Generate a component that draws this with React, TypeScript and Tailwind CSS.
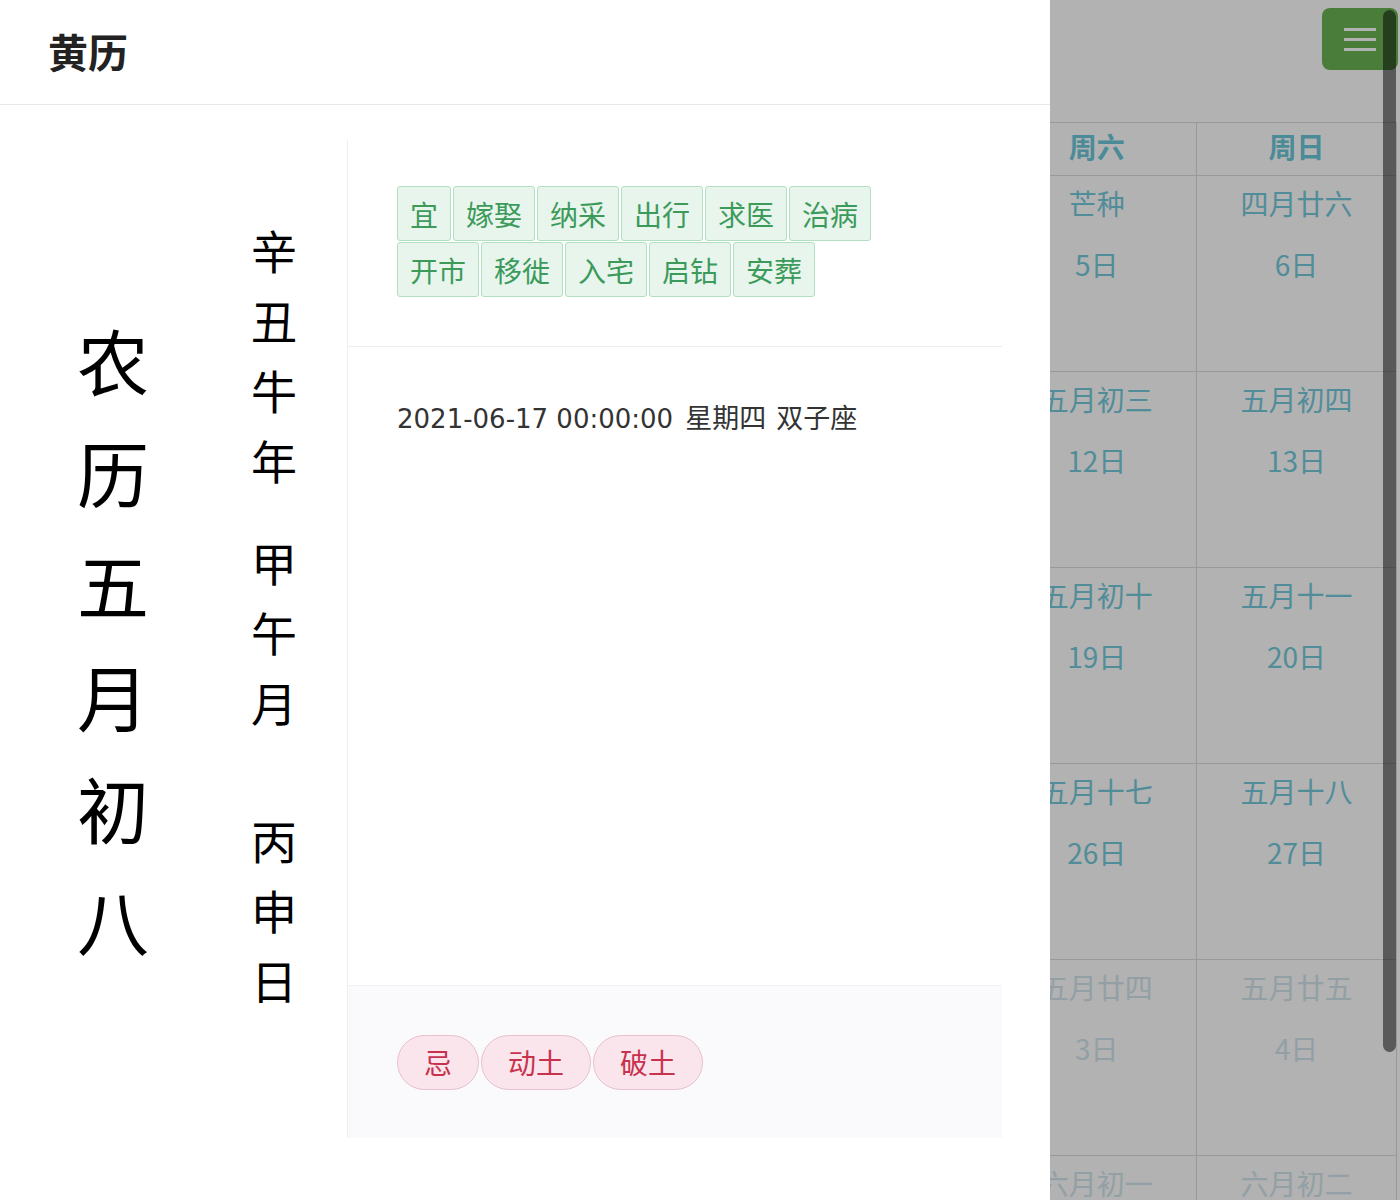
import React from "react";

const font = { fontFamily: '"Noto Sans CJK SC", "Noto Sans", sans-serif' };
const latin = { fontFamily: '"DejaVu Sans", "Noto Sans CJK SC", sans-serif' };

type Cell = { lunar: string; day: string; faded?: boolean };

const weeks: Cell[][] = [
  [
    { lunar: "四月二十", day: "31日", faded: true },
    { lunar: "四月廿一", day: "1日" },
    { lunar: "四月廿二", day: "2日" },
    { lunar: "四月廿三", day: "3日" },
    { lunar: "四月廿四", day: "4日" },
    { lunar: "芒种", day: "5日" },
    { lunar: "四月廿六", day: "6日" },
  ],
  [
    { lunar: "四月廿七", day: "7日" },
    { lunar: "四月廿八", day: "8日" },
    { lunar: "四月廿九", day: "9日" },
    { lunar: "五月初一", day: "10日" },
    { lunar: "五月初二", day: "11日" },
    { lunar: "五月初三", day: "12日" },
    { lunar: "五月初四", day: "13日" },
  ],
  [
    { lunar: "端午节", day: "14日" },
    { lunar: "五月初六", day: "15日" },
    { lunar: "五月初七", day: "16日" },
    { lunar: "五月初八", day: "17日" },
    { lunar: "五月初九", day: "18日" },
    { lunar: "五月初十", day: "19日" },
    { lunar: "五月十一", day: "20日" },
  ],
  [
    { lunar: "夏至", day: "21日" },
    { lunar: "五月十三", day: "22日" },
    { lunar: "五月十四", day: "23日" },
    { lunar: "五月十五", day: "24日" },
    { lunar: "五月十六", day: "25日" },
    { lunar: "五月十七", day: "26日" },
    { lunar: "五月十八", day: "27日" },
  ],
  [
    { lunar: "五月十九", day: "28日" },
    { lunar: "五月二十", day: "29日" },
    { lunar: "五月廿一", day: "30日" },
    { lunar: "五月廿二", day: "1日", faded: true },
    { lunar: "五月廿三", day: "2日", faded: true },
    { lunar: "五月廿四", day: "3日", faded: true },
    { lunar: "五月廿五", day: "4日", faded: true },
  ],
  [
    { lunar: "五月廿六", day: "5日", faded: true },
    { lunar: "五月廿七", day: "6日", faded: true },
    { lunar: "小暑", day: "7日", faded: true },
    { lunar: "五月廿九", day: "8日", faded: true },
    { lunar: "五月三十", day: "9日", faded: true },
    { lunar: "六月初一", day: "10日", faded: true },
    { lunar: "六月初二", day: "11日", faded: true },
  ],
];

const weekdays = ["周一", "周二", "周三", "周四", "周五", "周六", "周日"];

const yi = ["宜", "嫁娶", "纳采", "出行", "求医", "治病", "开市", "移徙", "入宅", "启钻", "安葬"];
const ji = ["忌", "动土", "破土"];

function CalendarPage() {
  return (
    <div className="relative h-[1200px] w-[1400px] overflow-hidden bg-white" style={font}>
      <div className="h-[122px]" />
      <div className="ml-[-3px] grid w-[1400px] grid-cols-7 border-l border-t border-[#dcdcdc]">
        {weekdays.map((w) => (
          <div
            key={w}
            className="flex h-[53px] items-center justify-center border-b border-r border-[#dcdcdc] pb-[7px] text-[28px] font-bold leading-[36px] text-[#6cc8da]"
          >
            {w}
          </div>
        ))}
        {weeks.flat().map((c, i) => (
          <div
            key={i}
            className={`flex h-[196px] flex-col items-center border-b border-r border-[#dcdcdc] pt-[7px] text-[28px] ${
              c.faded ? "text-[#d2e6ec]" : "text-[#74cadb]"
            }`}
          >
            <div className="leading-[40px]">{c.lunar}</div>
            <div className="mt-[21px] leading-[40px]">{c.day}</div>
          </div>
        ))}
      </div>
      <button className="absolute right-[2px] top-[8px] flex h-[62px] w-[76px] flex-col items-center justify-center gap-[7px] rounded-[8px] bg-[#6ab253]">
        <span className="block h-[3px] w-[32px] bg-white" />
        <span className="block h-[3px] w-[32px] bg-white" />
        <span className="block h-[3px] w-[32px] bg-white" />
      </button>
    </div>
  );
}

function Drawer() {
  const big = ["农", "历", "五", "月", "初", "八"];
  return (
    <div className="fixed left-0 top-0 flex h-[1200px] w-[1050px] flex-col bg-white" style={font}>
      <div className="flex h-[105px] shrink-0 items-center border-b border-[#e8e8e8] pb-[2px] pl-[48px] text-[40px] font-bold text-[#222]">
        黄历
      </div>
      <div className="flex pt-[35px]">
        <div className="flex h-[998px] w-[347px]">
          <div className="flex w-[226px] flex-col items-center justify-center text-[72px] text-black">
            {big.map((c, i) => (
              <div key={i} className="h-[112px] leading-[112px]">
                {c}
              </div>
            ))}
          </div>
          <div className="flex w-[96px] flex-col items-center pt-[74px] text-[46px] text-black">
            {["辛", "丑", "牛", "年"].map((c, i) => (
              <div key={"a" + i} className="h-[70px] leading-[70px]">
                {c}
              </div>
            ))}
            <div className="h-[32px]" />
            {["甲", "午", "月"].map((c, i) => (
              <div key={"b" + i} className="h-[70px] leading-[70px]">
                {c}
              </div>
            ))}
            <div className="h-[68px]" />
            {["丙", "申", "日"].map((c, i) => (
              <div key={"c" + i} className="h-[70px] leading-[70px]">
                {c}
              </div>
            ))}
          </div>
        </div>
        <div className="flex h-[998px] w-[655px] flex-col border-l border-[#eeeeee]">
          <div className="flex flex-wrap gap-x-[2px] gap-y-[1px] border-b border-[#eeeeee] px-[49px] pb-[49px] pt-[46px]">
            {yi.map((t) => (
              <span
                key={t}
                className="flex h-[55px] items-center rounded-[3px] border border-[#b3dfc1] bg-[#e8f5ed] px-[12px] text-[28px] leading-[36px] text-[#3c9a5b]"
              >
                {t}
              </span>
            ))}
          </div>
          <div className="flex-1 px-[49px] pt-[52px]">
            <div className="flex items-baseline leading-[36px] text-[#333]">
              <span className="text-[26px]" style={latin}>
                2021-06-17 00:00:00
              </span>
              <span className="ml-[12px] text-[27px]">星期四</span>
              <span className="ml-[10px] text-[27px]">双子座</span>
            </div>
          </div>
          <div className="flex h-[153px] items-center gap-[2px] border-t border-[#f1f1f4] bg-[#fafafc] px-[49px]">
            {ji.map((t) => (
              <span
                key={t}
                className="flex h-[55px] items-center rounded-full border border-[#e8bfca] bg-[#f9e5eb] px-[26px] text-[28px] leading-[36px] text-[#c8324f]"
              >
                {t}
              </span>
            ))}
          </div>
        </div>
      </div>
    </div>
  );
}

export default function App() {
  return (
    <div className="relative h-[1200px] w-[1400px] overflow-hidden">
      <CalendarPage />
      <div className="fixed inset-0 bg-black/30" />
      <div className="fixed right-[4px] top-[10px] h-[1042px] w-[13px] rounded-full bg-black/50" />
      <Drawer />
    </div>
  );
}
